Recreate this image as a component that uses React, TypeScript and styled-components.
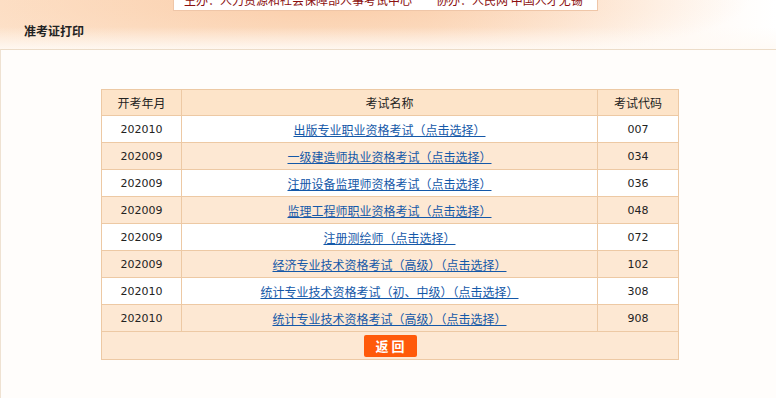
import styled, { createGlobalStyle } from 'styled-components';

const GlobalStyle = createGlobalStyle`
  html, body {
    margin: 0;
    padding: 0;
    background: #ffffff;
  }
  body {
    font-family: "Liberation Sans", "Noto Sans CJK SC", sans-serif;
    font-size: 12px;
    color: #333;
  }
`;

const exams = [
    { month: '202010', name: '出版专业职业资格考试（点击选择）', code: '007' },
    { month: '202009', name: '一级建造师执业资格考试（点击选择）', code: '034' },
    { month: '202009', name: '注册设备监理师资格考试（点击选择）', code: '036' },
    { month: '202009', name: '监理工程师职业资格考试（点击选择）', code: '048' },
    { month: '202009', name: '注册测绘师（点击选择）', code: '072' },
    { month: '202009', name: '经济专业技术资格考试（高级）（点击选择）', code: '102' },
    { month: '202010', name: '统计专业技术资格考试（初、中级）（点击选择）', code: '308' },
    { month: '202010', name: '统计专业技术资格考试（高级）（点击选择）', code: '908' },
];

export default function App() {
    return (
        <>
            <GlobalStyle />
            <Header>
                {/* sponsor strip, mostly scrolled out of view */}
                <SponsorBox>
                    <SponsorText>主办：人力资源和社会保障部人事考试中心　　协办：人民网 中国人才无锡</SponsorText>
                </SponsorBox>
                <PageTitle>准考证打印</PageTitle>
            </Header>
            <Panel>
                <ExamTable>
                    <thead>
                        <tr>
                            <HeadCell width={79}>开考年月</HeadCell>
                            <HeadCell>考试名称</HeadCell>
                            <HeadCell width={80}>考试代码</HeadCell>
                        </tr>
                    </thead>
                    <tbody>
                        {exams.map((e, i) => (
                            <Row key={e.code} shaded={i % 2 === 1}>
                                <NumCell>{e.month}</NumCell>
                                <Cell><ExamLink href="#">{e.name}</ExamLink></Cell>
                                <NumCell>{e.code}</NumCell>
                            </Row>
                        ))}
                        <Row shaded>
                            <ButtonCell colSpan={3}>
                                <BackButton>返 回</BackButton>
                            </ButtonCell>
                        </Row>
                    </tbody>
                </ExamTable>
            </Panel>
        </>
    );
}

const Header = styled.div`
    height: 49px;
    background:
        radial-gradient(ellipse 420px 70px at 330px 0px, rgba(250, 200, 160, 0.85), rgba(250, 210, 175, 0) 100%),
        linear-gradient(to right, #fde3cc 0%, #fde6d2 55%, #fff8f2 85%, #ffffff 100%);
    position: relative;
    &::after {
        content: '';
        position: absolute;
        left: 0;
        right: 0;
        bottom: 0;
        height: 22px;
        background: linear-gradient(to bottom, rgba(255, 255, 255, 0), rgba(255, 250, 245, 0.9));
    }
`;

const SponsorBox = styled.div`
    margin-left: 173px;
    width: 423px;
    height: 10px;
    overflow: hidden;
    background: #ffffff;
    border: 1px solid #efc6a8;
    border-top: 0;
    position: relative;
    z-index: 1;
`;

const SponsorText = styled.div`
    margin-top: -8px;
    padding-left: 10px;
    font-family: "Noto Sans CJK SC", sans-serif;
    font-size: 12px;
    line-height: 16px;
    color: #8b1010;
    white-space: nowrap;
`;

const PageTitle = styled.div`
    position: relative;
    z-index: 1;
    margin: 12px 0 0 24px;
    font-family: "Noto Sans CJK SC", sans-serif;
    font-size: 12px;
    font-weight: 700;
    line-height: 16px;
    color: #222;
`;

const Panel = styled.div`
    border-top: 1px solid #ecdcc8;
    border-left: 1px solid #efe2d2;
    background: #fffdfb;
    min-height: 349px;
    box-sizing: border-box;
    padding: 39px 0 0 100px;
`;

const ExamTable = styled.table`
    width: 578px;
    border-collapse: collapse;
    border: 1px solid #edc9a4;
    table-layout: fixed;
`;

const HeadCell = styled.th<{ width?: number }>`
    width: ${(p) => (p.width ? `${p.width}px` : 'auto')};
    height: 25px;
    padding: 0;
    background: #fde4c9;
    border: 1px solid #edc9a4;
    font-family: "Noto Sans CJK SC", sans-serif;
    font-weight: 400;
    font-size: 12px;
    color: #222;
    text-align: center;
`;

const Row = styled.tr<{ shaded?: boolean }>`
    background: ${(p) => (p.shaded ? '#fde8d3' : '#ffffff')};
`;

const Cell = styled.td`
    height: 26px;
    padding: 0;
    border: 1px solid #edc9a4;
    text-align: center;
    font-family: "Noto Sans CJK SC", sans-serif;
    font-size: 12px;
`;

const NumCell = styled(Cell)`
    font-family: "DejaVu Sans", "Liberation Sans", sans-serif;
    font-size: 11px;
    color: #222;
`;

const ExamLink = styled.a`
    color: #1458a8;
    text-decoration: underline;
`;

const ButtonCell = styled.td`
    height: 27px;
    padding: 0;
    text-align: center;
    border: 1px solid #edc9a4;
`;

const BackButton = styled.button`
    display: inline-block;
    vertical-align: middle;
    width: 53px;
    height: 22px;
    padding: 0;
    border: 0;
    border-radius: 2px;
    background: #ff5a0a;
    color: #ffffff;
    font-family: "Noto Sans CJK SC", sans-serif;
    font-size: 13px;
    font-weight: 700;
    line-height: 22px;
    cursor: pointer;
`;
